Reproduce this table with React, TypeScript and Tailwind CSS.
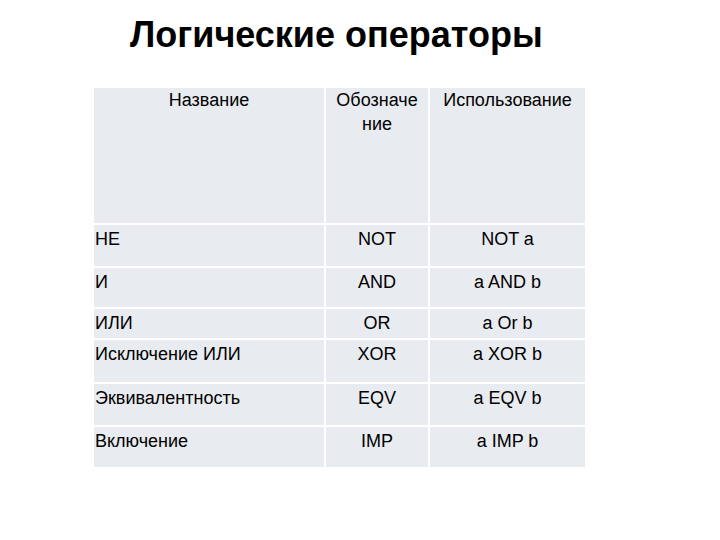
const rows = [
  { name: "НЕ", op: "NOT", use: "NOT a", h: "h-[43px]" },
  { name: "И", op: "AND", use: "a AND b", h: "h-[41px]" },
  { name: "ИЛИ", op: "OR", use: "a Or b", h: "h-[31px]" },
  { name: "Исключение ИЛИ", op: "XOR", use: "a XOR b", h: "h-[44px]" },
  { name: "Эквивалентность", op: "EQV", use: "a EQV b", h: "h-[43px]" },
  { name: "Включение", op: "IMP", use: "a IMP b", h: "h-[41px]" },
];

export default function App() {
  return (
    <div className="w-[720px] h-[540px] bg-white font-['Liberation_Sans',Arial,sans-serif] text-black">
      <div className="pt-[12px] pl-[130px]">
        <h1 className="text-[36px] leading-[46px] font-bold">Логические операторы</h1>
      </div>

      <div className="ml-[94px] mt-[30px] w-[491px]">
        <table className="w-full border-collapse text-[18px] leading-[24px]">
          <colgroup>
            <col className="w-[231px]" />
            <col className="w-[104px]" />
            <col className="w-[156px]" />
          </colgroup>
          <thead>
            <tr className="h-[136px] bg-[#e8ebef]">
              <th className="align-top font-normal text-center pt-0 border-r-2 border-b-2 border-white">Название</th>
              <th className="align-top font-normal text-center pt-0 border-r-2 border-b-2 border-white">
                Обозначе
                <br />
                ние
              </th>
              <th className="align-top font-normal text-center pt-0 border-b-2 border-white">Использование</th>
            </tr>
          </thead>
          <tbody>
            {rows.map((r, i) => (
              <tr key={r.op} className={`${r.h} bg-[#e8ebef]`}>
                <td className={`align-top text-left pl-[1px] pt-[2px] border-r-2 border-white ${i < rows.length - 1 ? "border-b-2" : ""}`}>
                  {r.name}
                </td>
                <td className={`align-top text-center pt-[2px] border-r-2 border-white ${i < rows.length - 1 ? "border-b-2" : ""}`}>
                  {r.op}
                </td>
                <td className={`align-top text-center pt-[2px] border-white ${i < rows.length - 1 ? "border-b-2" : ""}`}>
                  {r.use}
                </td>
              </tr>
            ))}
          </tbody>
        </table>
      </div>
    </div>
  );
}
